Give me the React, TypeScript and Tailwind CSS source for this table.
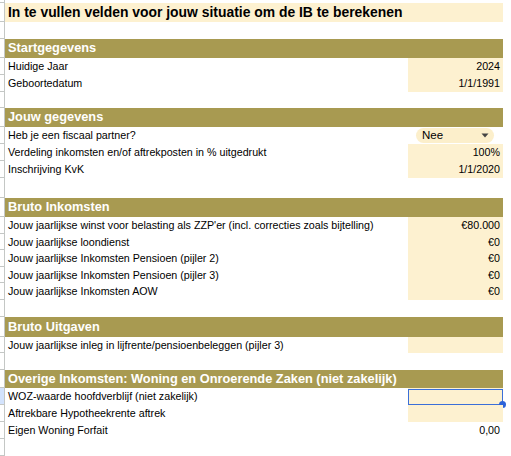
import React from "react";

type Row =
  | { kind: "title"; text: string; h: number }
  | { kind: "blank"; h: number }
  | { kind: "header"; text: string; h: number }
  | {
      kind: "field";
      label: string;
      value?: string;
      h: number;
      fill?: boolean;
      select?: boolean;
      active?: boolean;
    };

const rows: Row[] = [
  { kind: "title", text: "In te vullen velden voor jouw situatie om de IB te berekenen", h: 19 },
  { kind: "blank", h: 17 },
  { kind: "header", text: "Startgegevens", h: 19 },
  { kind: "field", label: "Huidige Jaar", value: "2024", h: 17, fill: true },
  { kind: "field", label: "Geboortedatum", value: "1/1/1991", h: 17, fill: true },
  { kind: "blank", h: 16 },
  { kind: "header", text: "Jouw gegevens", h: 19 },
  { kind: "field", label: "Heb je een fiscaal partner?", value: "Nee", h: 17, select: true },
  { kind: "field", label: "Verdeling inkomsten en/of aftrekposten in % uitgedrukt", value: "100%", h: 17, fill: true },
  { kind: "field", label: "Inschrijving KvK", value: "1/1/2020", h: 17, fill: true },
  { kind: "blank", h: 20 },
  { kind: "header", text: "Bruto Inkomsten", h: 19 },
  { kind: "field", label: "Jouw jaarlijkse winst voor belasting als ZZP'er (incl. correcties zoals bijtelling)", value: "€80.000", h: 17, fill: true },
  { kind: "field", label: "Jouw jaarlijkse loondienst", value: "€0", h: 16, fill: true },
  { kind: "field", label: "Jouw jaarlijkse Inkomsten Pensioen (pijler 2)", value: "€0", h: 17, fill: true },
  { kind: "field", label: "Jouw jaarlijkse Inkomsten Pensioen (pijler 3)", value: "€0", h: 16, fill: true },
  { kind: "field", label: "Jouw jaarlijkse Inkomsten AOW", value: "€0", h: 17, fill: true },
  { kind: "blank", h: 17 },
  { kind: "header", text: "Bruto Uitgaven", h: 20 },
  { kind: "field", label: "Jouw jaarlijkse inleg in lijfrente/pensioenbeleggen (pijler 3)", value: "", h: 16, fill: true },
  { kind: "blank", h: 17 },
  { kind: "header", text: "Overige Inkomsten: Woning en Onroerende Zaken (niet zakelijk)", h: 18 },
  { kind: "field", label: "WOZ-waarde hoofdverblijf (niet zakelijk)", value: "", h: 17, fill: true, active: true },
  { kind: "field", label: "Aftrekbare Hypotheekrente aftrek", value: "", h: 17, fill: true },
  { kind: "field", label: "Eigen Woning Forfait", value: "0,00", h: 17 },
  { kind: "blank", h: 17 },
];

function Gutter({ active }: { active?: boolean }) {
  return (
    <div
      className={
        "w-[5px] shrink-0 border-r border-b border-[#c4c7c5] " +
        (active ? "bg-[#d3e3fd]" : "bg-white")
      }
    />
  );
}

export default function App() {
  return (
    <div className="w-[511px] h-[456px] overflow-hidden bg-white font-['Liberation_Sans',Arial,sans-serif] text-black">
      <div className="flex h-[3px]">
        <Gutter />
        <div className="w-[498px]" />
      </div>
      {rows.map((row, i) => (
        <div key={i} className="flex" style={{ height: row.h }}>
          <Gutter active={row.kind === "field" && row.active} />
          {row.kind === "title" && (
            <div className="w-[498px] bg-[#fdf1d0] pl-[3px] flex items-center text-[13.9px] font-bold leading-none">
              {row.text}
            </div>
          )}
          {row.kind === "blank" && <div className="w-[498px]" />}
          {row.kind === "header" && (
            <div className="w-[498px] bg-[#a89a51] pl-[3px] flex items-center text-[12.8px] font-bold text-white leading-none">
              {row.text}
            </div>
          )}
          {row.kind === "field" && (
            <div className="w-[498px] flex text-[10.7px] leading-none">
              <div className="flex-1 pl-[3px] flex items-center whitespace-nowrap">
                {row.label}
              </div>
              {row.select ? (
                <div className="w-[95px] flex items-center pl-[8px] pr-[6px]">
                  <div className="w-[78px] h-[15px] rounded-full bg-[#fcefcb] flex items-center justify-between pl-[6px] pr-[5px] text-[11.5px]">
                    <span>Nee</span>
                    <svg width="8" height="5" viewBox="0 0 8 5">
                      <path d="M0.5 0.5 L7.5 0.5 L4 4.5 Z" fill="#444" />
                    </svg>
                  </div>
                </div>
              ) : (
                <div
                  className={
                    "relative w-[95px] flex items-center justify-end pr-[3px] " +
                    (row.fill ? "bg-[#fdf1d0]" : "")
                  }
                >
                  {row.value}
                  {row.active && (
                    <>
                      <div className="absolute inset-x-0 top-[1px] bottom-0 border-[1.5px] border-[#3b6fd8]" />
                      <div className="absolute right-[-3px] bottom-[-3px] w-[7px] h-[7px] rounded-full bg-[#2d63d8]" />
                    </>
                  )}
                </div>
              )}
            </div>
          )}
        </div>
      ))}
    </div>
  );
}
